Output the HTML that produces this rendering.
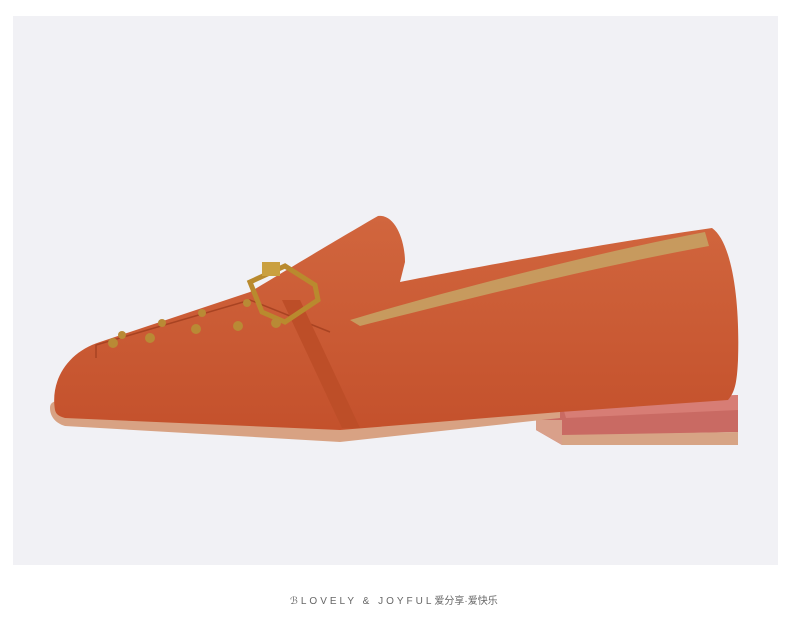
<!DOCTYPE html>
<html><head><meta charset="utf-8"><style>
html,body{margin:0;padding:0;background:#fff;width:790px;height:625px;overflow:hidden}
.box{position:absolute;left:13px;top:16px;width:765px;height:549px;background:#f1f1f5}
svg{position:absolute;left:0;top:0}
.cap{position:absolute;left:290px;top:592px;font:10px "Liberation Sans","Noto Sans CJK SC",sans-serif;color:#666;letter-spacing:3px;white-space:nowrap}
.cap span{letter-spacing:0}
</style></head><body>
<div class="box"></div>
<svg width="790" height="625" viewBox="0 0 790 625">
 <defs>
  <linearGradient id="g" x1="0" y1="0" x2="0" y2="1">
   <stop offset="0" stop-color="#d1663e"/><stop offset="1" stop-color="#c4512c"/>
  </linearGradient>
 </defs>
 <!-- heel -->
 <path d="M536,420 L562,404 L738,395 L738,432 L566,436 L562,445 L536,430 Z" fill="#c96a63"/>
 <path d="M562,404 L738,395 L738,410 L566,418 Z" fill="#d77d75"/>
 <path d="M536,420 L562,420 L562,445 L536,430 Z" fill="#d9a08a"/>
 <path d="M562,435 L738,432 L738,445 L562,445 Z" fill="#d7a485"/>
 <!-- sole -->
 <path d="M50,408 C50,402 55,400 62,402 L560,408 L560,418 L340,442 L65,426 C55,423 50,416 50,408 Z" fill="#d8a283"/>
 <!-- upper -->
 <path d="M55,410 C50,380 68,352 100,342 L250,292 C300,262 350,232 378,216 C395,214 405,240 405,262 L400,282 C450,272 600,244 712,228 C732,242 740,300 738,360 C737,382 735,392 728,400 L560,412 L340,430 L65,418 C58,416 56,414 55,410 Z" fill="url(#g)"/>
 <path d="M350,320 C450,290 600,252 705,232 L709,246 C600,266 470,298 360,326 Z" fill="#c79a5e"/>
 <path d="M96,358 L96,345 L250,300 L330,332" fill="none" stroke="#a84322" stroke-width="1.5"/>
 <!-- strap -->
 <path d="M282,300 L300,300 L360,428 L342,428 Z" fill="#bd4e28"/>
 <!-- buckle -->
 <path d="M250,282 L285,266 L315,285 L318,300 L285,322 L262,312 Z" fill="none" stroke="#b98a2e" stroke-width="5"/>
 <rect x="262" y="262" width="18" height="14" fill="#caa040"/>
 <!-- studs -->
 <g fill="#b98a35">
  <circle cx="113" cy="343" r="5"/><circle cx="122" cy="335" r="4"/><circle cx="150" cy="338" r="5"/>
  <circle cx="162" cy="323" r="4"/><circle cx="196" cy="329" r="5"/><circle cx="202" cy="313" r="4"/>
  <circle cx="238" cy="326" r="5"/><circle cx="276" cy="323" r="5"/><circle cx="247" cy="303" r="4"/>
 </g>
</svg>
<div class="cap">ℬLOVELY &amp; JOYFUL<span>爱分享·爱快乐</span></div>
</body></html>
